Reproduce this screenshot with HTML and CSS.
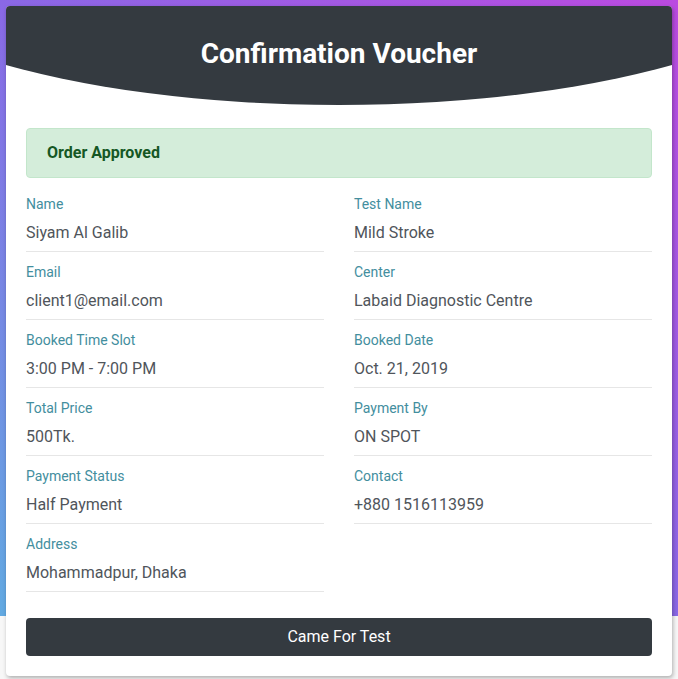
FILE: index.html
```html
<!DOCTYPE html>
<html lang="en">
<head>
<meta charset="utf-8">
<title>Confirmation Voucher</title>
<link rel="stylesheet" href="styles.css">
</head>
<body>
<div class="card">
  <div class="card-header">
    <h1 class="title">Confirmation Voucher</h1>
  </div>
  <div class="card-body">
    <div class="alert">Order Approved</div>
    <div class="details">
      <div class="item"><div class="label">Name</div><div class="value">Siyam Al Galib</div></div>
      <div class="item"><div class="label">Test Name</div><div class="value">Mild Stroke</div></div>
      <div class="item"><div class="label">Email</div><div class="value">client1@email.com</div></div>
      <div class="item"><div class="label">Center</div><div class="value">Labaid Diagnostic Centre</div></div>
      <div class="item"><div class="label">Booked Time Slot</div><div class="value">3:00 PM - 7:00 PM</div></div>
      <div class="item"><div class="label">Booked Date</div><div class="value">Oct. 21, 2019</div></div>
      <div class="item"><div class="label">Total Price</div><div class="value">500Tk.</div></div>
      <div class="item"><div class="label">Payment By</div><div class="value">ON SPOT</div></div>
      <div class="item"><div class="label">Payment Status</div><div class="value">Half Payment</div></div>
      <div class="item"><div class="label">Contact</div><div class="value">+880 1516113959</div></div>
      <div class="item"><div class="label">Address</div><div class="value">Mohammadpur, Dhaka</div></div>
    </div>
    <button class="btn" type="button">Came For Test</button>
  </div>
</div>
</body>
</html>
```

FILE: styles.css
```css
* { box-sizing: border-box; }

html, body { margin: 0; padding: 0; }

body {
  padding: 6px;
  font-family: Roboto, "Liberation Sans", Arial, sans-serif;
  background-color: #f7f7f7;
  background-image: linear-gradient(to top right, #62aae2 0%, #8a68e6 50%, #bb4ae0 100%);
  background-size: 100% 616px;
  background-repeat: no-repeat;
  min-height: 679px;
}

.card {
  background: #fff;
  border-radius: 4px;
  overflow: hidden;
  box-shadow: 1px 2px 4px rgba(0, 0, 0, 0.3);
}

.card-header {
  height: 99px;
  background: #343a40;
  clip-path: ellipse(500px 157px at 50% -58px);
  padding-top: 31px;
}

.title {
  margin: 0;
  color: #fff;
  font-size: 28px;
  line-height: 34px;
  font-weight: 700;
  text-align: center;
}

.card-body {
  padding: 23px 20px 20px;
}

.alert {
  background: #d4edda;
  border: 1px solid #c3e6cb;
  border-radius: 4px;
  color: #155724;
  font-weight: 700;
  font-size: 16px;
  line-height: 24px;
  padding: 12px 20px;
  margin-bottom: 16px;
}

.details {
  display: grid;
  grid-template-columns: 1fr 1fr;
  column-gap: 30px;
  row-gap: 10px;
}

.item {
  border-bottom: 1px solid #e6e6e6;
  padding-bottom: 6px;
}

.label {
  font-size: 14px;
  line-height: 21px;
  color: #438e9e;
}

.value {
  margin-top: 6px;
  font-size: 16px;
  line-height: 24px;
  color: #50555b;
}

.btn {
  display: block;
  width: 100%;
  margin-top: 26px;
  height: 38px;
  border: none;
  border-radius: 4px;
  background: #343a40;
  color: #fff;
  font-family: inherit;
  font-size: 16px;
  line-height: 24px;
  padding: 6px 12px;
}
```
